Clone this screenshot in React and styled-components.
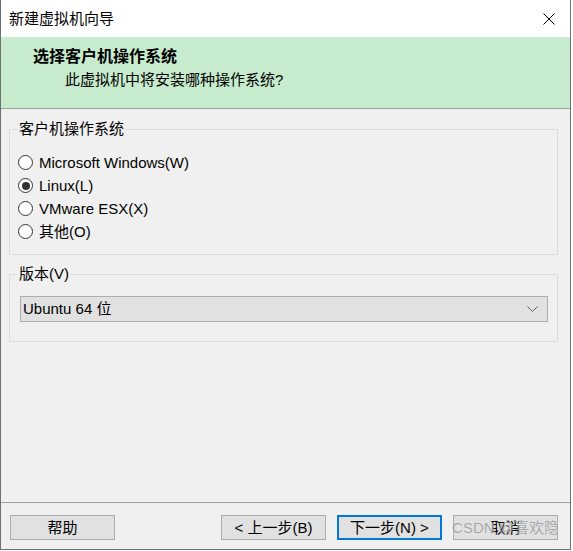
import React from 'react'
import styled, { createGlobalStyle } from 'styled-components'

const GlobalStyle = createGlobalStyle`
  html, body {
    margin: 0;
    padding: 0;
    background: #ffffff;
  }
  body {
    font-family: "Liberation Sans", "Noto Sans CJK SC", sans-serif;
    font-size: 15px;
    color: #000;
  }
`

const Window = styled.div`
  position: relative;
  box-sizing: border-box;
  width: 571px;
  height: 550px;
  display: flex;
  flex-direction: column;
  border: 1px solid #707070;
  border-top: none;
  background: #f0f0f0;
`

const TitleBar = styled.div`
  height: 37px;
  flex: none;
  display: flex;
  align-items: center;
  justify-content: space-between;
  padding: 0 15px 0 8px;
  background: #ffffff;
`

const TitleText = styled.span`
  font-size: 15px;
  line-height: 20px;
`

const Header = styled.div`
  flex: none;
  box-sizing: border-box;
  height: 72px;
  padding: 10px 0 0 32px;
  background: #c7ebcd;
  border-bottom: 1px solid #a0a0a0;
`

const HeaderTitle = styled.div`
  font-size: 16px;
  font-weight: bold;
  line-height: 20px;
`

const HeaderSub = styled.div`
  font-size: 15px;
  line-height: 20px;
  margin-top: 3px;
  padding-left: 32px;
`

const Body = styled.div`
  flex: 1;
  padding: 10px 12px 0 8px;
  display: flex;
  flex-direction: column;
  gap: 9px;
`

const Group = styled.fieldset`
  margin: 0;
  padding: 0 8px ${({ bottom }) => bottom}px 8px;
  border: 1px solid #dcdcdc;
  min-width: 0;
`

const Legend = styled.legend`
  padding: 0 1px;
  margin-left: 0;
  line-height: 20px;
  font-size: 15px;
`

const RadioList = styled.div`
  margin-top: 12px;
  display: flex;
  flex-direction: column;
`

const RadioRow = styled.label`
  display: flex;
  align-items: center;
  gap: 6px;
  height: 23px;
  line-height: 20px;
`

const RadioDot = styled.span`
  box-sizing: border-box;
  width: 15px;
  height: 15px;
  border-radius: 50%;
  border: 1px solid #333333;
  background: #ffffff;
  display: flex;
  align-items: center;
  justify-content: center;

  &::after {
    content: '';
    width: 8px;
    height: 8px;
    border-radius: 50%;
    background: ${({ checked }) => (checked ? '#333333' : 'transparent')};
  }
`

const Select = styled.div`
  box-sizing: border-box;
  margin: 12px 1px 0 2px;
  height: 26px;
  display: flex;
  align-items: center;
  justify-content: space-between;
  padding: 0 9px 0 2px;
  background: #e1e1e1;
  border: 1px solid #adadad;
  line-height: 20px;
`

const Footer = styled.div`
  flex: none;
  height: 47px;
  box-sizing: border-box;
  border-top: 1px solid #a0a0a0;
  padding: 12px 12px 0 9px;
  display: flex;
  align-items: flex-start;
  gap: 11px;
`

const Button = styled.button`
  box-sizing: border-box;
  width: 105px;
  height: 25px;
  padding: 0;
  font-family: inherit;
  font-size: 15px;
  line-height: 20px;
  color: #000;
  background: #e1e1e1;
  border: ${({ primary }) => (primary ? '2px solid #0078d7' : '1px solid #adadad')};
  margin-left: ${({ push }) => (push ? 'auto' : '0')};
`

const Watermark = styled.div`
  position: absolute;
  right: 11px;
  bottom: 11px;
  font-size: 15px;
  line-height: 20px;
  color: rgba(140, 140, 140, 0.75);
  pointer-events: none;
  text-shadow: 0 0 1px rgba(255, 255, 255, 0.6);
`

const CloseIcon = () => (
  <svg width="12" height="12" viewBox="0 0 12 12">
    <path d="M0.5 0.5 L11.5 11.5 M11.5 0.5 L0.5 11.5" stroke="#000" strokeWidth="1" fill="none" />
  </svg>
)

const Chevron = () => (
  <svg width="11" height="6" viewBox="0 0 11 6">
    <path d="M0.5 0.5 L5.5 5.5 L10.5 0.5" stroke="#606060" strokeWidth="1" fill="none" />
  </svg>
)

const options = [
  { label: 'Microsoft Windows(W)', checked: false },
  { label: 'Linux(L)', checked: true },
  { label: 'VMware ESX(X)', checked: false },
  { label: '其他(O)', checked: false },
]

export default function App() {
  return (
    <>
      <GlobalStyle />
      <Window>
        <TitleBar>
          <TitleText>新建虚拟机向导</TitleText>
          <CloseIcon />
        </TitleBar>
        <Header>
          <HeaderTitle>选择客户机操作系统</HeaderTitle>
          <HeaderSub>此虚拟机中将安装哪种操作系统?</HeaderSub>
        </Header>
        <Body>
          <Group bottom={11}>
            <Legend>客户机操作系统</Legend>
            <RadioList>
              {options.map((o) => (
                <RadioRow key={o.label}>
                  <RadioDot checked={o.checked} />
                  {o.label}
                </RadioRow>
              ))}
            </RadioList>
          </Group>
          <Group bottom={19}>
            <Legend>版本(V)</Legend>
            <Select>
              <span>Ubuntu 64 位</span>
              <Chevron />
            </Select>
          </Group>
        </Body>
        <Footer>
          <Button>帮助</Button>
          <Button push>&lt; 上一步(B)</Button>
          <Button primary>下一步(N) &gt;</Button>
          <Button>取消</Button>
        </Footer>
        <Watermark>CSDN @喜欢隐</Watermark>
      </Window>
    </>
  )
}
